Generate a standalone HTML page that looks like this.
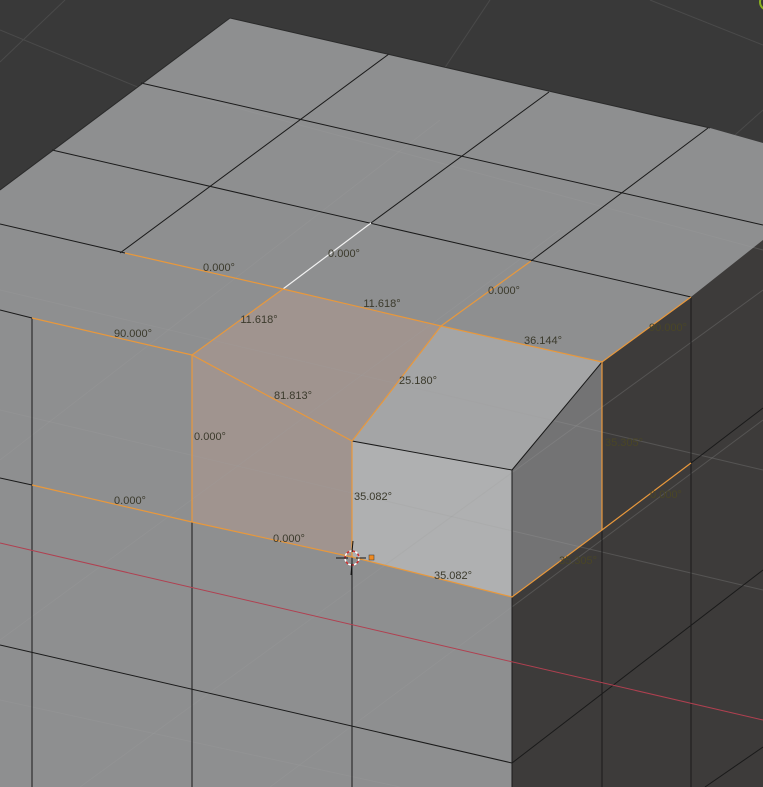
<!DOCTYPE html>
<html><head><meta charset="utf-8"><style>
html,body{margin:0;padding:0;background:#393939;overflow:hidden}
svg{display:block}
text{font-family:"Liberation Sans","DejaVu Sans",sans-serif;font-size:11px;fill:#3b3a2c;text-anchor:middle}
.d{fill:#4a4626}
</style></head><body>
<svg width="763" height="787" viewBox="0 0 763 787" xmlns="http://www.w3.org/2000/svg">
<rect width="763" height="787" fill="#393939"/>
<g stroke="#4a4a4a" stroke-width="1">
<line x1="0" y1="62" x2="65" y2="0"/><line x1="0" y1="30" x2="140" y2="88"/>
<line x1="410" y1="120" x2="490" y2="0"/><line x1="650" y1="0" x2="763" y2="45"/>
<line x1="690" y1="175" x2="763" y2="110"/>
</g>
<polygon points="230,18 710,128 763,143 763,787 0,787 0,190" fill="#8e8f90"/>
<polygon points="691,297 763,240 763,787 512,787 512,597 602,530 602,362" fill="#3d3b3a"/>
<polygon points="512,470 602,362 602,530 512,597" fill="#737374"/>
<polygon points="441,326 602,362 512,470 352,441" fill="#a4a5a6"/>
<polygon points="352,441 512,470 512,597 352,557" fill="#afb0b1"/>
<polygon points="192,355 283,289 441,326 384,400 352,441 352,557 192,522" fill="#a0948f"/>
<g stroke="#a0a0a0" stroke-opacity="0.25" stroke-width="1">
<line x1="0" y1="290" x2="763" y2="470"/><line x1="0" y1="410" x2="763" y2="590"/>
<line x1="0" y1="700" x2="400" y2="787"/>
<line x1="170" y1="90" x2="763" y2="250"/>
<line x1="0" y1="460" x2="440" y2="120"/><line x1="0" y1="640" x2="560" y2="230"/>
<line x1="80" y1="787" x2="763" y2="290"/><line x1="270" y1="787" x2="763" y2="420"/>
</g>
<g stroke="#1a1a1a" stroke-width="1" fill="none">
<line x1="389" y1="54" x2="120" y2="253"/>
<line x1="549" y1="92" x2="371" y2="223"/>
<line x1="708" y1="128" x2="531" y2="261"/>
<line x1="141" y1="83" x2="763" y2="225"/>
<line x1="52" y1="150" x2="691" y2="297"/>
<line x1="0" y1="224" x2="125" y2="253"/>
<line x1="0" y1="310" x2="32" y2="318"/>
<line x1="32" y1="318" x2="32" y2="787"/>
<line x1="192" y1="522" x2="192" y2="787"/>
<line x1="352" y1="557" x2="352" y2="787"/>
<line x1="0" y1="478" x2="32" y2="485"/>
<line x1="0" y1="645" x2="512" y2="763"/>
<line x1="512" y1="763" x2="763" y2="570"/>
<line x1="691" y1="463" x2="763" y2="408"/>
<line x1="705" y1="787" x2="763" y2="747"/>
<line x1="602" y1="530" x2="602" y2="787"/>
<line x1="691" y1="297" x2="691" y2="787"/>
<line x1="352" y1="441" x2="512" y2="470"/>
<line x1="512" y1="470" x2="602" y2="362"/>
<line x1="512" y1="470" x2="512" y2="787"/>
</g>
<line x1="230" y1="18" x2="710" y2="128" stroke="#2a2a2a"/>
<line x1="230" y1="18" x2="0" y2="190" stroke="#2a2a2a"/>
<line x1="371" y1="223" x2="283" y2="289" stroke="#f2f2f2" stroke-width="1.2"/>
<line x1="0" y1="543" x2="763" y2="720" stroke="#b04050" stroke-width="1"/>
<g stroke="#e8983c" stroke-width="1.2" fill="none">
<polyline points="125,253 283,289 441,326 602,362 691,297"/>
<polyline points="32,318 192,355 352,441 352,557"/>
<line x1="192" y1="355" x2="283" y2="289"/>
<line x1="192" y1="355" x2="192" y2="522"/>
<polyline points="441,326 384,400 352,441"/>
<line x1="441" y1="326" x2="531" y2="261"/>
<line x1="602" y1="362" x2="602" y2="530"/>
<polyline points="32,485 192,522 352,557 512,597 602,530 691,463"/>
</g>
<circle cx="352" cy="558" r="7" fill="none" stroke="#fff" stroke-width="1.5" stroke-dasharray="3 3"/>
<circle cx="352" cy="558" r="7" fill="none" stroke="#d03030" stroke-width="1.5" stroke-dasharray="3 3" stroke-dashoffset="3"/>
<line x1="336" y1="558" x2="348" y2="558" stroke="#111"/><line x1="356" y1="558" x2="366" y2="558" stroke="#111"/>
<line x1="353" y1="541" x2="352" y2="552" stroke="#111"/><line x1="352" y1="563" x2="351" y2="575" stroke="#111"/>
<rect x="369" y="555" width="5" height="5" fill="#f08a20" stroke="#333" stroke-width="0.5"/>
<circle cx="768" cy="2" r="8" fill="none" stroke="#8ab020" stroke-width="2"/>
<text x="344" y="257">0.000°</text>
<text x="219" y="271">0.000°</text>
<text x="504" y="294">0.000°</text>
<text x="382" y="307">11.618°</text>
<text x="259" y="323">11.618°</text>
<text x="133" y="337">90.000°</text>
<text x="543" y="344">36.144°</text>
<text x="668" y="331" class="d">90.000°</text>
<text x="418" y="384">25.180°</text>
<text x="293" y="399">81.813°</text>
<text x="210" y="440">0.000°</text>
<text x="624" y="446" class="d">35.305°</text>
<text x="373" y="500">35.082°</text>
<text x="130" y="504">0.000°</text>
<text x="666" y="498" class="d">0.000°</text>
<text x="289" y="542">0.000°</text>
<text x="453" y="579">35.082°</text>
<text x="578" y="564" class="d">35.305°</text>
</svg>
</body></html>
